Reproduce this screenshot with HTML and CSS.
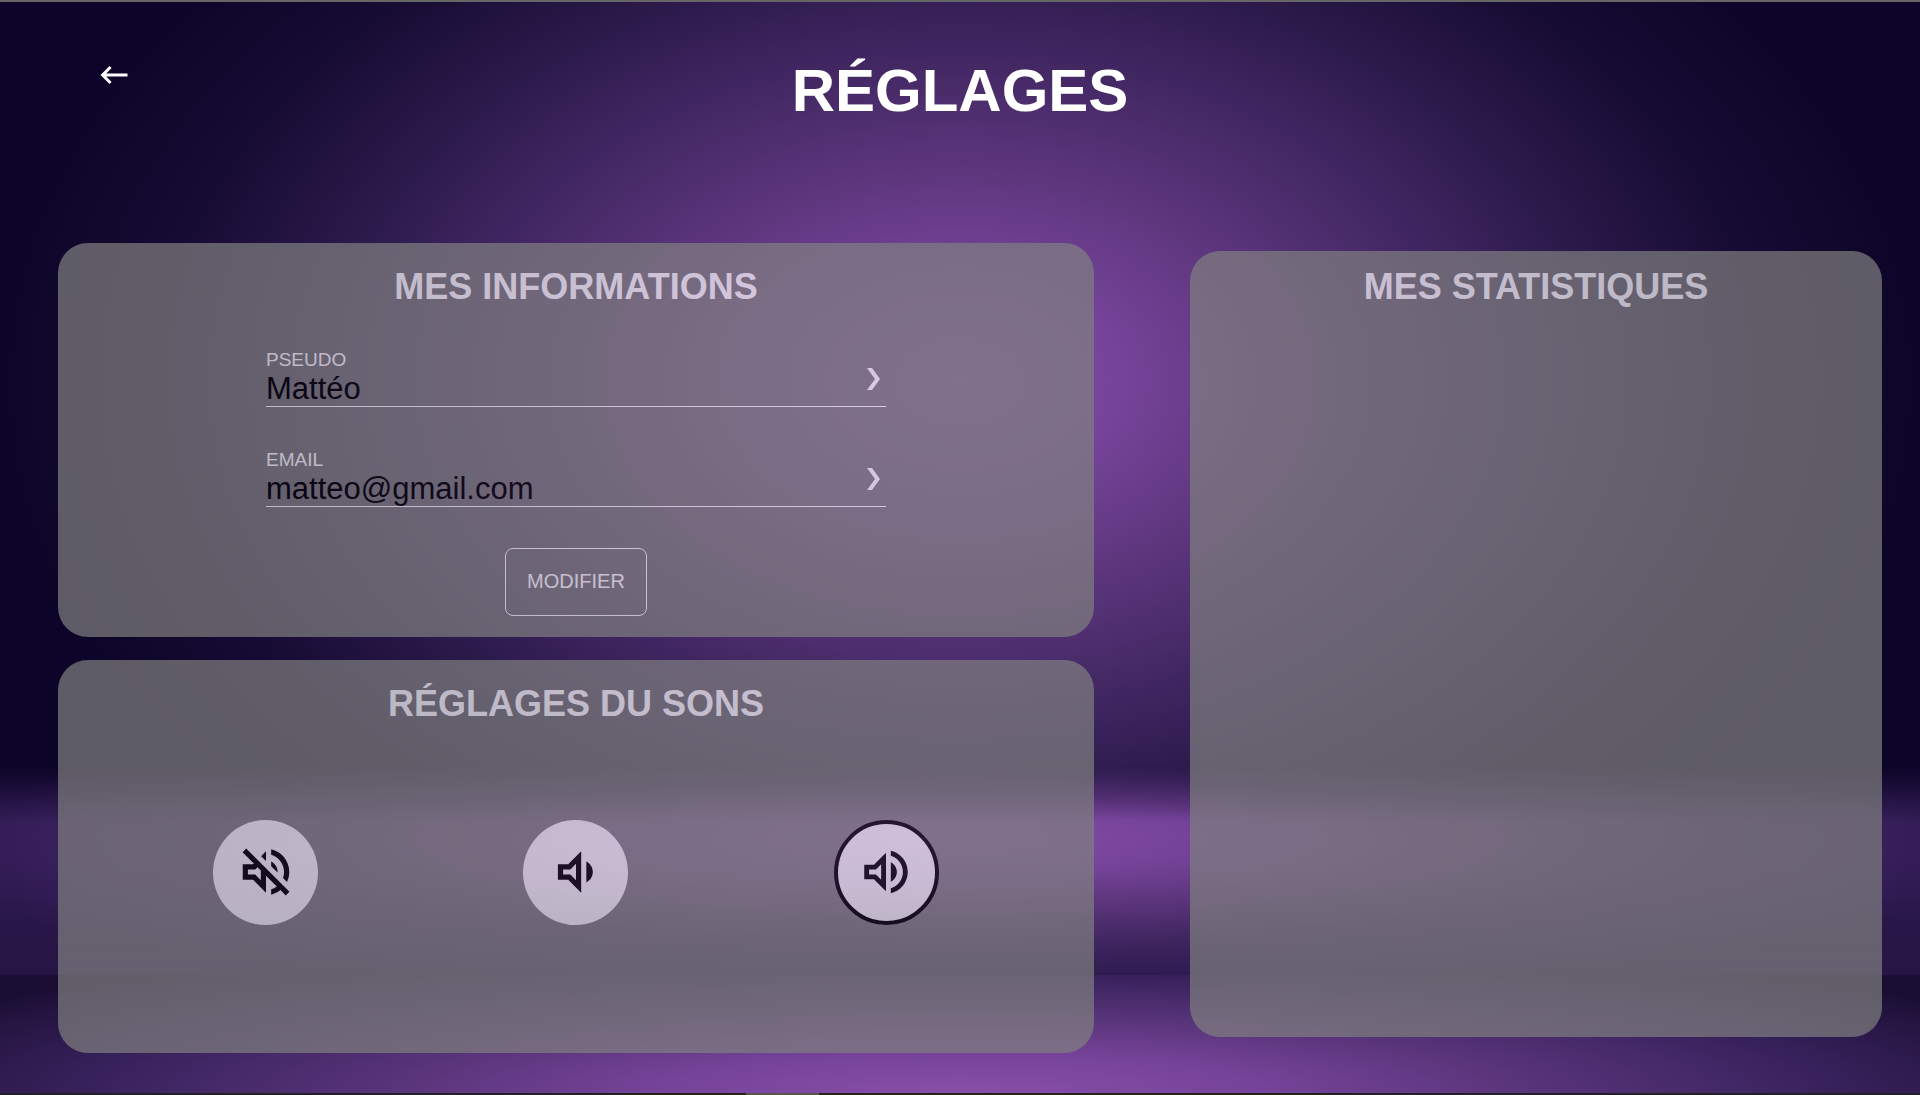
FILE: index.html
```html
<!DOCTYPE html>
<html lang="fr">
<head>
<meta charset="utf-8">
<title>Réglages</title>
<meta name="viewport" content="width=device-width, initial-scale=1">
<link rel="stylesheet" href="styles.css">
</head>
<body>
<div class="backdrop" aria-hidden="true">
  <div class="backdrop-sky"></div>
  <div class="backdrop-step"></div>
  <div class="backdrop-floor"></div>
</div>
<div class="page">
  <header class="header">
    <a class="back" href="#" aria-label="Retour">
      <svg class="back-icon" viewBox="0 0 24 24"><path d="M21 11H6.83l3.58-3.59L9 6l-6 6 6 6 1.41-1.41L6.83 13H21z"/></svg>
    </a>
    <h1 class="title">RÉGLAGES</h1>
  </header>
  <main class="panels">
    <section class="panel panel-info">
      <h2 class="panel-title">MES INFORMATIONS</h2>
      <form class="form">
        <div class="field">
          <div class="field-text">
            <label class="field-label" for="pseudo">PSEUDO</label>
            <input class="field-input" id="pseudo" type="text" value="Mattéo">
          </div>
          <svg class="chevron" viewBox="0 0 13 22"><path d="M0 0h5l8 11-8 11H0l8-11z"/></svg>
        </div>
        <div class="field">
          <div class="field-text">
            <label class="field-label" for="email">EMAIL</label>
            <input class="field-input" id="email" type="email" value="matteo@gmail.com">
          </div>
          <svg class="chevron" viewBox="0 0 13 22"><path d="M0 0h5l8 11-8 11H0l8-11z"/></svg>
        </div>
        <button class="submit" type="button">MODIFIER</button>
      </form>
    </section>
    <section class="panel panel-sound">
      <h2 class="panel-title">RÉGLAGES DU SONS</h2>
      <div class="sounds">
        <button class="sound" type="button" aria-label="Muet" aria-pressed="false">
          <svg class="sound-icon" viewBox="0 0 24 24"><path d="M4.34 2.93L2.93 4.34 7.29 8.7 7 9H3v6h4l5 5v-6.59l4.18 4.18c-.65.49-1.38.88-2.18 1.11v2.06c1.34-.3 2.57-.92 3.61-1.75l2.05 2.05 1.41-1.41L4.34 2.93zM10 15.17L7.83 13H5v-2h2.83l.88-.88L10 11.41v3.76zM19 12c0 .82-.15 1.61-.41 2.34l1.53 1.53c.56-1.17.88-2.48.88-3.87 0-4.28-2.99-7.86-7-8.77v2.06c2.89.86 5 3.54 5 6.71zm-7-8l-1.88 1.88L12 7.76V4zm4.5 8c0-1.77-1.02-3.29-2.5-4.03v1.79l2.48 2.48c.01-.08.02-.16.02-.24z"/></svg>
        </button>
        <button class="sound" type="button" aria-label="Volume bas" aria-pressed="false">
          <svg class="sound-icon" viewBox="0 0 24 24"><path d="M16 7.97v8.05c1.48-.73 2.5-2.25 2.5-4.02 0-1.77-1.02-3.29-2.5-4.03zM5 9v6h4l5 5V4L9 9H5zm7-.17v6.34L9.83 13H7v-2h2.83L12 8.83z"/></svg>
        </button>
        <button class="sound sound-active" type="button" aria-label="Volume haut" aria-pressed="true">
          <svg class="sound-icon" viewBox="0 0 24 24"><path d="M3 9v6h4l5 5V4L7 9H3zm7-.17v6.34L7.83 13H5v-2h2.83L10 8.83zM16.5 12c0-1.77-1.02-3.29-2.5-4.03v8.05c1.48-.73 2.5-2.25 2.5-4.02zM14 3.23v2.06c2.89.86 5 3.54 5 6.71s-2.11 5.85-5 6.71v2.06c4.01-.91 7-4.49 7-8.77s-2.99-7.86-7-8.77z"/></svg>
        </button>
      </div>
    </section>
    <section class="panel panel-stats">
      <h2 class="panel-title">MES STATISTIQUES</h2>
    </section>
  </main>
  <div class="scroll-track"><div class="scroll-thumb"></div></div>
</div>
</body>
</html>
```

FILE: styles.css
```css
* {
  box-sizing: border-box;
}

body {
  margin: 0;
  background: #0d0529;
  color: #fff;
  font-family: "Liberation Sans", Arial, sans-serif;
}

/* Stage: lit wall, step in front of it, floor */
.backdrop {
  position: fixed;
  inset: 0;
  z-index: -1;
  display: grid;
  grid-template-rows: 70fr 19fr 11fr;
}

.backdrop-sky {
  margin-bottom: -80px;
  background: radial-gradient(ellipse 50vw 58vh at 50% 45%, #844da4 0%, #754399 17%, #5d367d 33%, #432864 50%, #2b194a 67%, #170c34 83%, #0d0529 100%);
}

.backdrop-step {
  background:
    linear-gradient(to bottom, transparent 50%, rgba(18, 10, 46, 0.2) 100%),
    radial-gradient(ellipse 56vw 15vh at 50% 34%, #844da4 0%, #754399 22%, #5d367d 45%, #432864 68%, #341d56 90%, #2c184c 100%);
  -webkit-mask-image: linear-gradient(to bottom, transparent 0, #000 26%);
  mask-image: linear-gradient(to bottom, transparent 0, #000 26%);
}

.backdrop-floor {
  background: radial-gradient(ellipse 62vw 15vh at 50% 100%, #8a4fa8 0%, #754399 26%, #583479 48%, #3c2460 70%, #2a1848 86%, #1a0e34 100%);
}

.page {
  display: flex;
  flex-direction: column;
  min-height: 100vh;
  border-top: 2px solid #666;
}

.header {
  display: grid;
  grid-template-columns: 1fr auto 1fr;
  align-items: start;
  padding: 55px 5vw 118px;
}

.back {
  width: 36px;
  height: 36px;
}

.back-icon {
  display: block;
  width: 36px;
  height: 36px;
  fill: #fff;
}

.title {
  margin: 0;
  font-size: 60px;
  line-height: 68px;
}

.panels {
  flex: 1;
  display: grid;
  grid-template-columns: 3fr 2fr;
  grid-template-rows: 1fr 1fr;
  gap: 23px 5vw;
  padding: 0 2vw 40px 3vw;
}

.panel {
  display: flex;
  flex-direction: column;
  padding: 23px 0 20px;
  border-radius: 30px;
  background: #808080;
  opacity: 0.7;
}

.panel-stats {
  grid-column: 2;
  grid-row: 1 / 3;
  margin: 8px 0 16px;
  padding-top: 15px;
}

.panel-title {
  margin: 0;
  font-size: 36px;
  line-height: 41px;
  text-align: center;
}

.form {
  display: flex;
  flex-direction: column;
  gap: 41px;
  margin: 41px 20% 0;
  padding: 0 1px;
}

.field {
  display: flex;
  align-items: center;
  border-bottom: 1px solid #fff;
}

.field-text {
  flex: 1;
  display: flex;
  flex-direction: column;
}

.field-label {
  font-size: 19px;
  line-height: 23px;
}

.field-input {
  width: 100%;
  height: 35px;
  padding: 0;
  border: 0;
  outline: 0;
  background: transparent;
  color: #000;
  font-family: inherit;
  font-size: 31px;
}

.chevron {
  width: 13px;
  height: 22px;
  margin: 4px 6px 0 0;
  fill: #fff;
}

.submit {
  align-self: center;
  padding: 21px 21px 23px;
  border: 1px solid #fff;
  border-radius: 8px;
  background: transparent;
  color: #fff;
  font-family: inherit;
  font-size: 20px;
  line-height: 22px;
}

.sounds {
  display: grid;
  grid-template-columns: repeat(3, 1fr);
  justify-items: center;
  margin: 96px 53px 0;
}

.sound {
  display: grid;
  place-items: center;
  width: 105px;
  height: 105px;
  padding: 0;
  border: 0;
  border-radius: 50%;
  background: #efefef;
}

.sound-icon {
  width: 62px;
  height: 62px;
  fill: #000;
}

.sound-active {
  border: 4px solid #000;
}

.sound-active .sound-icon {
  width: 58px;
  height: 58px;
}

.scroll-track {
  display: grid;
  grid-template-columns: 746fr 73fr 1101fr;
  height: 2px;
  background: #222;
}

.scroll-thumb {
  grid-column: 2;
  background: #555;
}
```
